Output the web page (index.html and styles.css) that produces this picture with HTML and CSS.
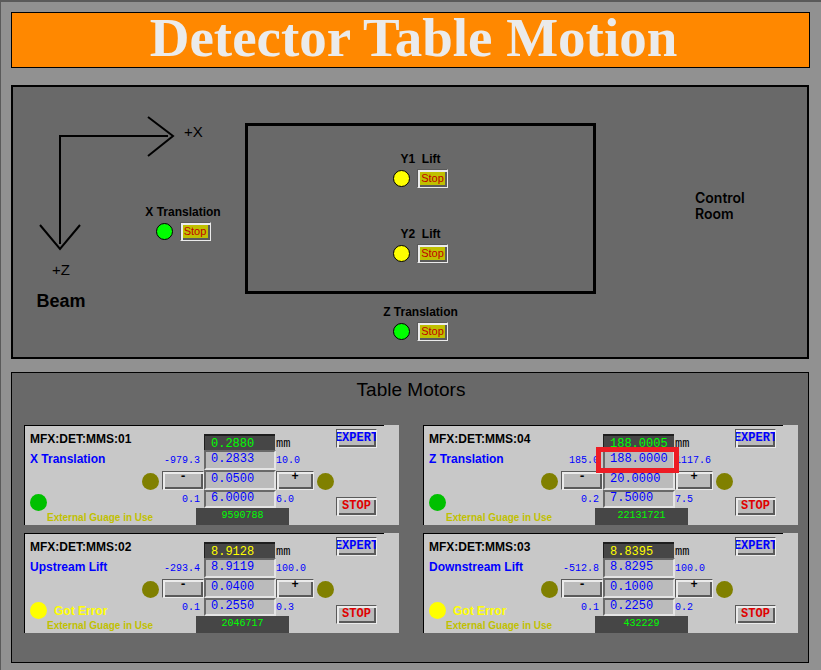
FILE: index.html
```html
<!DOCTYPE html>
<html lang="en">
<head>
<meta charset="utf-8">
<title>Detector Table Motion</title>
<link rel="stylesheet" href="styles.css">
</head>
<body>
<h1 class="banner">Detector Table Motion</h1>

<main class="screen">
<section class="diagram">
  <div class="beam-side">
    <svg class="axes" width="141" height="136" viewBox="0 0 141 136" fill="none" stroke="#000" stroke-width="2" aria-hidden="true">
      <path d="M24 20H133M25 19V128M113 1L138 20L113 40M5 109L25 133L45 109"/>
    </svg>
    <span class="axis-label axis-x">+X</span>
    <div class="device device-x">
      <span class="device-name">X Translation</span>
      <div class="device-row"><i class="lamp lamp-ok"></i><button class="btn btn-halt">Stop</button></div>
    </div>
    <div class="beam-labels">
      <span class="axis-label">+Z</span>
      <strong class="beam">Beam</strong>
    </div>
  </div>
  <div class="center">
    <div class="table-outline">
      <div class="device">
        <span class="device-name">Y1&nbsp; Lift</span>
        <div class="device-row"><i class="lamp lamp-warn"></i><button class="btn btn-halt">Stop</button></div>
      </div>
      <div class="device">
        <span class="device-name">Y2&nbsp; Lift</span>
        <div class="device-row"><i class="lamp lamp-warn"></i><button class="btn btn-halt">Stop</button></div>
      </div>
    </div>
    <div class="device">
      <span class="device-name">Z Translation</span>
      <div class="device-row"><i class="lamp lamp-ok"></i><button class="btn btn-halt">Stop</button></div>
    </div>
  </div>
  <div class="room">Control<br>Room</div>
</section>

<section class="motors">
  <h2 class="motors-title">Table Motors</h2>
  <div class="motor-grid">

    <article class="motor">
      <div class="info">
        <h3 class="motor-id">MFX:DET:MMS:01</h3>
        <div class="motor-name">X Translation</div>
        <div class="status"><i class="dot dot-ok"></i></div>
        <div class="gauge">External Guage in Use</div>
      </div>
      <div class="controls">
        <output class="readback">0.2880</output><span class="unit">mm</span>
        <span class="low">-979.3</span><div class="cell"><input class="field" aria-label="Position" value="0.2833"></div><span class="high">10.0</span>
        <i class="dot limit"></i><button class="btn btn-jog">-</button><div class="cell"><input class="field" aria-label="Step" value="0.0500"></div><button class="btn btn-jog">+</button><i class="dot limit limit-high"></i>
        <span class="low">0.1</span><div class="cell"><input class="field" aria-label="Speed" value="6.0000"></div><span class="high">6.0</span>
        <output class="counter">9590788</output>
      </div>
      <div class="actions"><button class="btn btn-expert">EXPERT</button><button class="btn btn-stop">STOP</button></div>
    </article>

    <article class="motor">
      <div class="info">
        <h3 class="motor-id">MFX:DET:MMS:04</h3>
        <div class="motor-name">Z Translation</div>
        <div class="status"><i class="dot dot-ok"></i></div>
        <div class="gauge">External Guage in Use</div>
      </div>
      <div class="controls">
        <output class="readback">188.0005</output><span class="unit">mm</span>
        <span class="low">185.0</span><div class="cell"><input class="field" aria-label="Position" value="188.0000"><i class="highlight"></i></div><span class="high">1117.6</span>
        <i class="dot limit"></i><button class="btn btn-jog">-</button><div class="cell"><input class="field" aria-label="Step" value="20.0000"></div><button class="btn btn-jog">+</button><i class="dot limit limit-high"></i>
        <span class="low">0.2</span><div class="cell"><input class="field" aria-label="Speed" value="7.5000"></div><span class="high">7.5</span>
        <output class="counter">22131721</output>
      </div>
      <div class="actions"><button class="btn btn-expert">EXPERT</button><button class="btn btn-stop">STOP</button></div>
    </article>

    <article class="motor">
      <div class="info">
        <h3 class="motor-id">MFX:DET:MMS:02</h3>
        <div class="motor-name">Upstream Lift</div>
        <div class="status"><i class="dot dot-warn"></i>Got Error</div>
        <div class="gauge">External Guage in Use</div>
      </div>
      <div class="controls">
        <output class="readback readback-warn">8.9128</output><span class="unit">mm</span>
        <span class="low">-293.4</span><div class="cell"><input class="field" aria-label="Position" value="8.9119"></div><span class="high">100.0</span>
        <i class="dot limit"></i><button class="btn btn-jog">-</button><div class="cell"><input class="field" aria-label="Step" value="0.0400"></div><button class="btn btn-jog">+</button><i class="dot limit limit-high"></i>
        <span class="low">0.1</span><div class="cell"><input class="field" aria-label="Speed" value="0.2550"></div><span class="high">0.3</span>
        <output class="counter">2046717</output>
      </div>
      <div class="actions"><button class="btn btn-expert">EXPERT</button><button class="btn btn-stop">STOP</button></div>
    </article>

    <article class="motor">
      <div class="info">
        <h3 class="motor-id">MFX:DET:MMS:03</h3>
        <div class="motor-name">Downstream Lift</div>
        <div class="status"><i class="dot dot-warn"></i>Got Error</div>
        <div class="gauge">External Guage in Use</div>
      </div>
      <div class="controls">
        <output class="readback readback-warn">8.8395</output><span class="unit">mm</span>
        <span class="low">-512.8</span><div class="cell"><input class="field" aria-label="Position" value="8.8295"></div><span class="high">100.0</span>
        <i class="dot limit"></i><button class="btn btn-jog">-</button><div class="cell"><input class="field" aria-label="Step" value="0.1000"></div><button class="btn btn-jog">+</button><i class="dot limit limit-high"></i>
        <span class="low">0.1</span><div class="cell"><input class="field" aria-label="Speed" value="0.2250"></div><span class="high">0.2</span>
        <output class="counter">432229</output>
      </div>
      <div class="actions"><button class="btn btn-expert">EXPERT</button><button class="btn btn-stop">STOP</button></div>
    </article>

  </div>
</section>
</main>
</body>
</html>
```
FILE: styles.css
```css
* { box-sizing: border-box; }

html { background: #919191; }

body {
  margin: 0;
  min-height: 100vh;
  padding: 10px 11px 7px 10px;
  border-top: 2px solid #5a5a5a;
  border-left: 1px solid #5a5a5a;
  background: #919191;
  color: #000;
  font: 12px "Liberation Sans", sans-serif;
}

.banner {
  margin: 0;
  padding: 0 0 4px 6px;
  border: 1px solid #000;
  background: #ff8800;
  color: #ebebeb;
  font: bold 55px/50px "Liberation Serif", serif;
  text-align: center;
}

.screen {
  display: flex;
  flex-direction: column;
  gap: 13px;
  margin: 17px 1px 0 0;
}

/* Beamline diagram */

.diagram {
  display: grid;
  grid-template-columns: 232px minmax(0, 351fr) minmax(0, 211fr);
  min-height: 274px;
  border: 2px solid #000;
  background: #696969;
}

.beam-side {
  display: grid;
  grid-template-columns: 108px 1fr;
  grid-template-rows: 88px 46px 1fr;
  padding: 29px 0 0 22px;
}

.axes { grid-area: 1 / 1 / 4 / 3; }

.axis-label { font-size: 15px; line-height: 20px; }

.axis-x { grid-area: 1 / 2; padding: 6px 0 0 41px; }

.device-x { grid-area: 2 / 2; justify-self: start; }

.beam-labels {
  grid-area: 3 / 1;
  display: flex;
  flex-direction: column;
  align-items: center;
  gap: 10px;
  width: 52px;
  padding-top: 10px;
}

.beam { font-size: 18px; line-height: 22px; }

.device {
  display: flex;
  flex-direction: column;
  align-items: center;
  gap: 2px;
  min-width: 80px;
}

.device-name { font-weight: bold; line-height: 16px; }

.device-row { display: flex; align-items: center; gap: 7px; }

.lamp {
  width: 17px;
  height: 17px;
  border: 1px solid #000;
  border-radius: 50%;
}

.lamp-ok { background: #00ff00; }
.lamp-warn { background: #ffff00; }

.center {
  display: flex;
  flex-direction: column;
  gap: 10px;
  padding-top: 36px;
}

.table-outline {
  display: flex;
  flex-direction: column;
  gap: 38px;
  height: 171px;
  padding-top: 25px;
  border: 3px solid #000;
}

.room {
  padding: 103px 0 0 99px;
  font: 600 14px/16px Inter, sans-serif;
}

/* Buttons */

.btn {
  display: block;
  padding: 0;
  overflow: hidden;
  border: 1px solid;
  border-color: #5a5a5a #ebebeb #ebebeb #5a5a5a;
  border-radius: 0;
  background: #bbbbbb;
  box-shadow: inset 2px 2px #ebebeb, inset -2px -2px #5a5a5a;
  white-space: nowrap;
}

.btn-halt {
  width: 31px;
  height: 19px;
  background: #c0c000;
  color: #c00000;
  font: 11px/17px "Liberation Sans", sans-serif;
}

.btn-jog {
  height: 19px;
  align-self: end;
  padding-bottom: 7px;
  font: bold 12px/10px "Liberation Mono", monospace;
}

.btn-expert, .btn-stop {
  display: flex;
  align-items: center;
  justify-content: center;
  width: 41px;
  height: 19px;
  font: bold 12px/17px "Liberation Mono", monospace;
}

.btn-expert { color: #0000ff; }
.btn-stop { color: #e00000; }

/* Motor panels */

.motors {
  padding: 5px 10px 29px 12px;
  border: 1px solid #000;
  background: #696969;
}

.motors-title {
  margin: 0 0 23px;
  font-size: 19px;
  font-weight: normal;
  line-height: 24px;
  text-align: center;
}

.motor-grid {
  display: grid;
  grid-template-columns: 1fr 1fr;
  gap: 8px 24px;
}

.motor {
  display: grid;
  grid-template-columns: minmax(0, 1fr) auto auto;
  border-left: 1px solid #000;
  background: linear-gradient(#000, #000) no-repeat 0 0 / 96% 1px #c8c8c8;
}

.info {
  display: flex;
  flex-direction: column;
  padding: 4px 0 0 5px;
  white-space: nowrap;
}

.motor-id { margin: 0; font-size: 12px; line-height: 20px; }

.motor-name { color: #0000ff; font-weight: bold; line-height: 20px; }

.status {
  display: flex;
  align-items: center;
  gap: 7px;
  margin-top: auto;
  color: #ffff00;
  font-weight: bold;
}

.gauge {
  padding-left: 17px;
  color: #c0c000;
  font-size: 10px;
  font-weight: bold;
  line-height: 14px;
}

.dot { width: 17px; height: 17px; border-radius: 50%; }

.dot-ok { background: #00c000; }
.dot-warn { background: #ffff00; }

.controls {
  display: grid;
  grid-template-columns: 20px 42px 72px 38px 20px;
  grid-template-rows: 16px 20px 20px 18px 17px;
  padding-top: 9px;
  color: #0000ff;
  font: 10px "Liberation Mono", monospace;
}

.readback {
  grid-column: 3;
  margin-right: 1px;
  padding-left: 6px;
  overflow: hidden;
  border: solid #1e1e1e;
  border-width: 2px 0 0 1px;
  background: #464646;
  color: #00ff00;
  font-size: 12px;
  line-height: 16px;
}

.readback-warn { color: #ffff00; }

.unit {
  color: #000;
  font-size: 12px;
  line-height: 20px;
}

.low {
  grid-column: 1 / 3;
  align-self: center;
  padding-right: 4px;
  text-align: right;
}

.high { grid-column: 4 / 6; align-self: center; }

.cell { position: relative; display: flex; }

.field {
  width: 100%;
  height: 100%;
  padding: 0 0 2px 5px;
  border: 2px solid;
  border-color: #696969 #e4e4e4 #e4e4e4 #696969;
  border-radius: 0;
  background: #bbbbbb;
  color: #0000ff;
  font: 12px "Liberation Mono", monospace;
}

.highlight {
  position: absolute;
  inset: -3px -4px -3px -7px;
  z-index: 1;
  border: 5px solid #ed1c24;
}

.limit { align-self: end; background: #808000; }

.limit-high { justify-self: end; }

.counter {
  grid-column: 2 / 5;
  margin: 0 25px 0 34px;
  background: #464646;
  color: #00ff00;
  line-height: 16px;
  text-align: center;
}

.actions {
  display: flex;
  flex-direction: column;
  justify-content: space-between;
  padding: 4px 22px 9px 2px;
}
```
